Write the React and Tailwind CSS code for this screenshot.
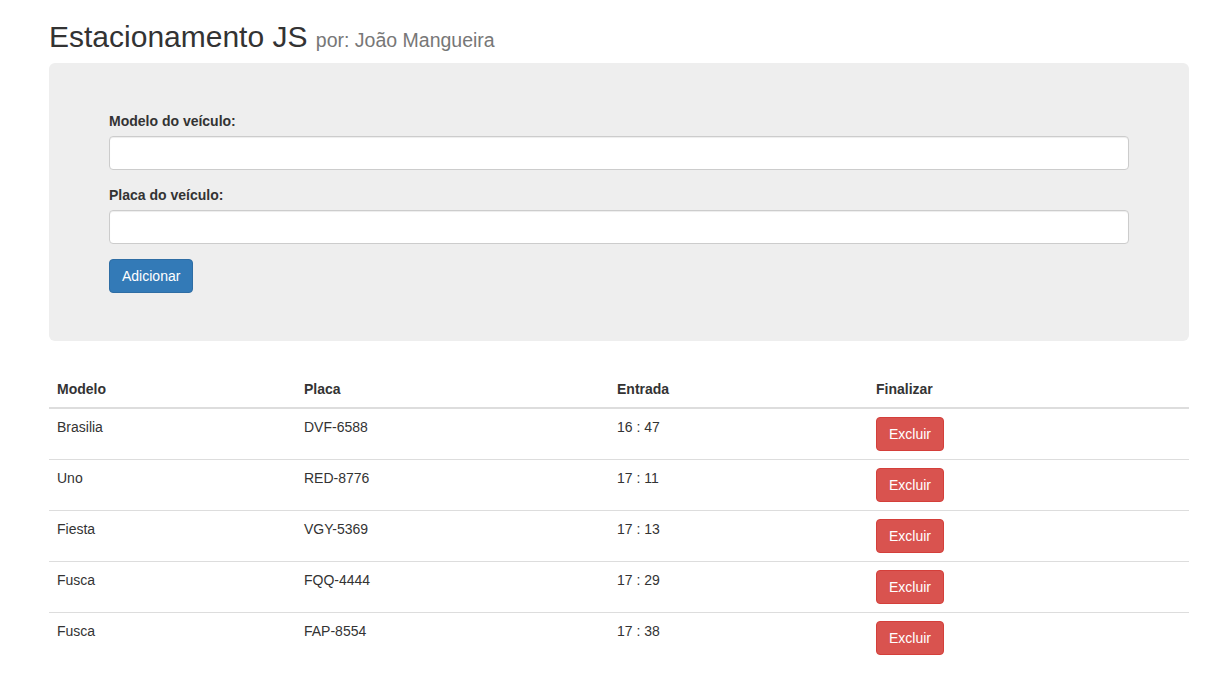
import React from "react";

const cars = [
  { modelo: "Brasilia", placa: "DVF-6588", entrada: "16 : 47" },
  { modelo: "Uno", placa: "RED-8776", entrada: "17 : 11" },
  { modelo: "Fiesta", placa: "VGY-5369", entrada: "17 : 13" },
  { modelo: "Fusca", placa: "FQQ-4444", entrada: "17 : 29" },
  { modelo: "Fusca", placa: "FAP-8554", entrada: "17 : 38" },
];

export default function App() {
  return (
    <div className="min-h-screen bg-white text-[#333] text-[14px] leading-[20px] font-['Liberation_Sans',Arial,sans-serif]">
      <div className="w-[1140px] ml-[49px]">
        <h1 className="pt-[20px] mb-[6px] text-[30px] leading-[33px] font-normal">
          Estacionamento JS{" "}
          <small className="text-[19.5px] text-[#777]">por: João Mangueira</small>
        </h1>
        <Form />
        <CarTable />
      </div>
    </div>
  );
}

function Form() {
  return (
    <div className="bg-[#eee] rounded-[6px] px-[60px] pt-[48px] pb-[48px] mb-[30px]">
      <div className="mb-[15px]">
        <label className="block font-bold mb-[5px]">Modelo do veículo:</label>
        <input
          type="text"
          className="block w-full h-[34px] bg-white border border-[#ccc] rounded-[4px] px-3 shadow-[inset_0_1px_1px_rgba(0,0,0,0.075)] outline-none"
        />
      </div>
      <div className="mb-[15px]">
        <label className="block font-bold mb-[5px]">Placa do veículo:</label>
        <input
          type="text"
          className="block w-full h-[34px] bg-white border border-[#ccc] rounded-[4px] px-3 shadow-[inset_0_1px_1px_rgba(0,0,0,0.075)] outline-none"
        />
      </div>
      <button className="h-[34px] px-[12px] bg-[#337ab7] border border-[#2e6da4] rounded-[4px] text-white">
        Adicionar
      </button>
    </div>
  );
}

function CarTable() {
  return (
    <table className="w-full border-collapse">
      <thead>
        <tr className="border-b-2 border-[#ddd] text-left">
          <th className="w-[247px] p-2 font-bold">Modelo</th>
          <th className="w-[313px] p-2 font-bold">Placa</th>
          <th className="w-[259px] p-2 font-bold">Entrada</th>
          <th className="p-2 font-bold">Finalizar</th>
        </tr>
      </thead>
      <tbody>
        {cars.map((car, i) => (
          <tr key={i} className={i > 0 ? "border-t border-[#ddd]" : ""}>
            <td className="p-2 align-top">{car.modelo}</td>
            <td className="p-2 align-top">{car.placa}</td>
            <td className="p-2 align-top">{car.entrada}</td>
            <td className="p-2 align-top">
              <button className="h-[34px] px-[12px] bg-[#d9534f] border border-[#d43f3a] rounded-[4px] text-white">
                Excluir
              </button>
            </td>
          </tr>
        ))}
      </tbody>
    </table>
  );
}
